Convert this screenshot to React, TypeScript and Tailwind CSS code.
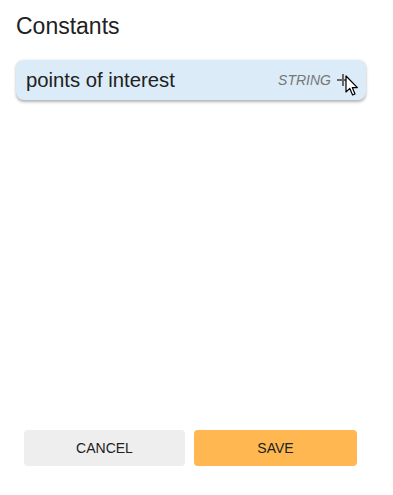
import React from "react";

function Cursor() {
  return (
    <svg
      className="absolute left-[345px] top-[75px] pointer-events-none"
      width="14"
      height="22"
      viewBox="0 0 14 22"
    >
      <path
        d="M1 1 L1 17 L4.8 13.4 L7.6 20 L10 19 L7.3 12.6 L12.4 12.6 Z"
        fill="#fff"
        stroke="#000"
        strokeWidth="1.2"
        strokeLinejoin="round"
      />
    </svg>
  );
}

export default function App() {
  return (
    <div className="relative flex h-[495px] w-[393px] flex-col bg-white font-['Liberation_Sans',Arial,sans-serif] text-[#212121]">
      <div className="px-4 pt-[12px] text-[23px] leading-[28px]">Constants</div>

      <div className="mt-[20px] ml-[16px] mr-[27px] flex h-[40px] items-center rounded-[8px] bg-[#dbebf8] pl-[10px] pr-[16px] shadow-[0_1.5px_3px_rgba(0,0,0,0.3)]">
        <span className="text-[20.3px] leading-none">points of interest</span>
        <span className="ml-auto text-[14px] italic text-[#777]">STRING</span>
        <svg className="ml-[5px]" width="14" height="14" viewBox="0 0 14 14">
          <path d="M7 1 V13 M1 7 H13" stroke="#666" strokeWidth="2" />
        </svg>
      </div>

      <div className="mt-auto mb-[29px] flex gap-[9px] pl-[24px]">
        <button className="h-[36px] w-[161px] rounded-[4px] bg-[#eeeeee] text-[14px] text-[#212121]">
          CANCEL
        </button>
        <button className="h-[36px] w-[163px] rounded-[4px] bg-[#ffb851] text-[14px] text-[#212121]">
          SAVE
        </button>
      </div>

      <Cursor />
    </div>
  );
}
